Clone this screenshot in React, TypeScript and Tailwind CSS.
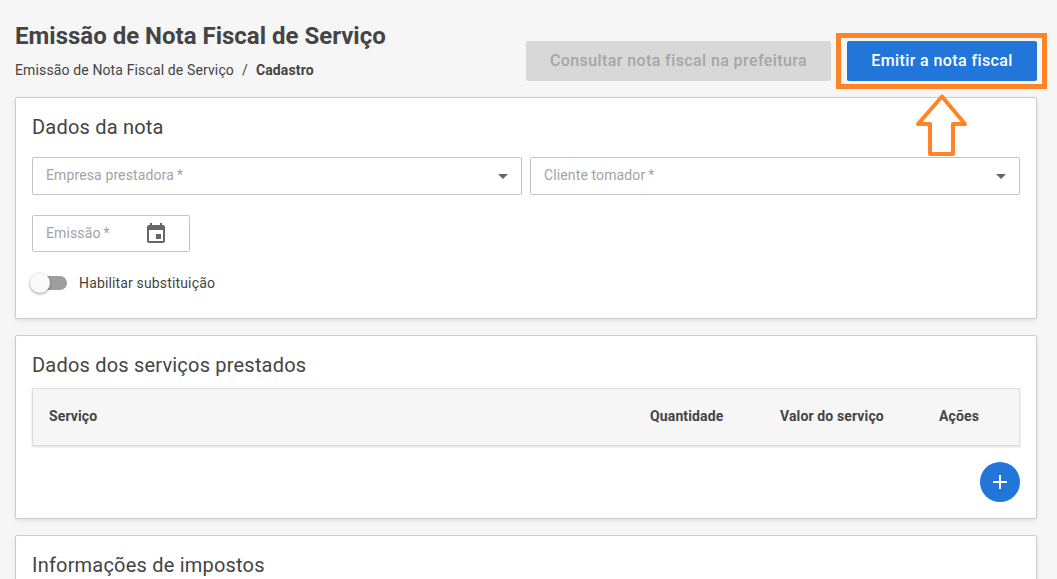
import { Plus } from 'lucide-react'

const inputClass = 'flex items-center border border-[#c4c4c4] rounded-[2px] bg-white pl-[13px] text-sm tracking-[0.12px] text-[#a3a3a3]'

function Caret() {
  return (
    <svg width="10" height="5" viewBox="0 0 10 5" className="mt-[1px] shrink-0">
      <path d="M0 0h10L5 5z" fill="#666666" />
    </svg>
  )
}

function SelectField({ label }: { label: string }) {
  return (
    <div className={`${inputClass} flex-1 h-[38px] justify-between pr-[13px]`}>
      <span className="pb-[2px]">{label}{'\u2009'}*</span>
      <Caret />
    </div>
  )
}

function Card({ title, children, className }: { title: string; children?: React.ReactNode; className?: string }) {
  return (
    <section className={`bg-white border border-[#cccccc] rounded-[2px] shadow-[0_2px_4px_rgba(0,0,0,0.08)] px-4 ${className ?? ''}`}>
      <h2 className="text-[20px] leading-[26px] text-[#444444] font-normal tracking-[0.2px]">{title}</h2>
      {children}
    </section>
  )
}

export default function App() {
  return (
    <div className="relative h-[579px] w-[1057px] overflow-hidden bg-[#f6f6f6] pl-[15px] pr-[20px] font-['Roboto',sans-serif] text-[#444444]">
      {/* Header */}
      <header className="flex h-[97px] items-start justify-between">
        <div className="pt-[21px]">
          <h1 className="text-[24px] leading-[30px] font-bold">Emissão de Nota Fiscal de Serviço</h1>
          <div className="mt-[8px] flex items-center text-sm leading-[22px] tracking-[0.13px]">
            <span>Emissão de Nota Fiscal de Serviço</span>
            <span className="mx-[8px]">/</span>
            <span className="font-bold">Cadastro</span>
          </div>
        </div>
        <div className="flex gap-4 pt-[41px]">
          <button className="h-10 w-[305px] rounded-[2px] bg-[#d8d8d8] text-base font-medium tracking-[0.4px] text-[#a6a6a6]">
            Consultar nota fiscal na prefeitura
          </button>
          <button className="h-10 w-[190px] rounded-[2px] bg-[#2275d9] text-base font-medium tracking-[0.4px] text-white">
            Emitir a nota fiscal
          </button>
        </div>
      </header>

      {/* Dados da nota */}
      <Card title="Dados da nota" className="h-[222px] pt-[16px]">
        <div className="mt-[17px] flex gap-2">
          <SelectField label="Empresa prestadora" />
          <SelectField label="Cliente tomador" />
        </div>
        <div className={`${inputClass} mt-[20px] h-[37px] w-[158px] justify-between pr-[21px]`}>
          <span className="pb-[1px]">Emissão{'\u2009'}*</span>
          <svg width="24" height="24" viewBox="0 0 24 24" fill="#666666" className="shrink-0">
            <path d="M17 12h-5v5h5v-5zM16 1v2H8V1H6v2H5c-1.11 0-1.99.9-1.99 2L3 19c0 1.1.89 2 2 2h14c1.1 0 2-.9 2-2V5c0-1.1-.9-2-2-2h-1V1h-2zm3 18H5V8h14v11z" />
          </svg>
        </div>
        <div className="mt-[21px] flex items-center">
          <div className="relative h-[14px] w-[35px] rounded-full bg-[#9e9e9e]">
            <span className="absolute left-[-2px] top-[-3px] h-5 w-5 rounded-full bg-[#fafafa] shadow-[0_1px_3px_rgba(0,0,0,0.4)]" />
          </div>
          <span className="ml-[12px] text-sm tracking-[0.15px]">Habilitar substituição</span>
        </div>
      </Card>

      {/* Dados dos serviços prestados */}
      <Card title="Dados dos serviços prestados" className="mt-4 h-[184px] pt-[16px]">
        <div className="mt-[10px] grid h-[58px] grid-cols-[601px_130px_159px_1fr] items-center border border-[#dddddd] bg-[#f6f6f6] pl-[16px] text-sm font-bold tracking-[0.13px] shadow-[0_1px_2px_rgba(0,0,0,0.14)]">
          <span className="pb-[2px]">Serviço</span>
          <span className="pb-[2px]">Quantidade</span>
          <span className="pb-[2px]">Valor do serviço</span>
          <span className="pb-[2px]">Ações</span>
        </div>
        <div className="mt-[16px] flex justify-end">
          <button className="flex h-10 w-10 items-center justify-center rounded-full bg-[#2275d9] text-white">
            <Plus size={24} strokeWidth={2} absoluteStrokeWidth strokeLinecap="butt" />
          </button>
        </div>
      </Card>

      {/* Informações de impostos */}
      <Card title="Informações de impostos" className="mt-4 h-[100px] pt-[16px]" />

      {/* Destaque do botão */}
      <div className="absolute left-[836px] top-[33px] h-[56px] w-[211px] border-[5px] border-[#ff8427]" />
      <svg className="absolute left-[915px] top-[90px]" width="54" height="70" viewBox="0 0 54 70">
        <path d="M27 6.5 L50 34 H38 V64 H15 V34 H3 Z" fill="none" stroke="#ff8427" strokeWidth="4" strokeLinejoin="round" />
      </svg>
    </div>
  )
}
